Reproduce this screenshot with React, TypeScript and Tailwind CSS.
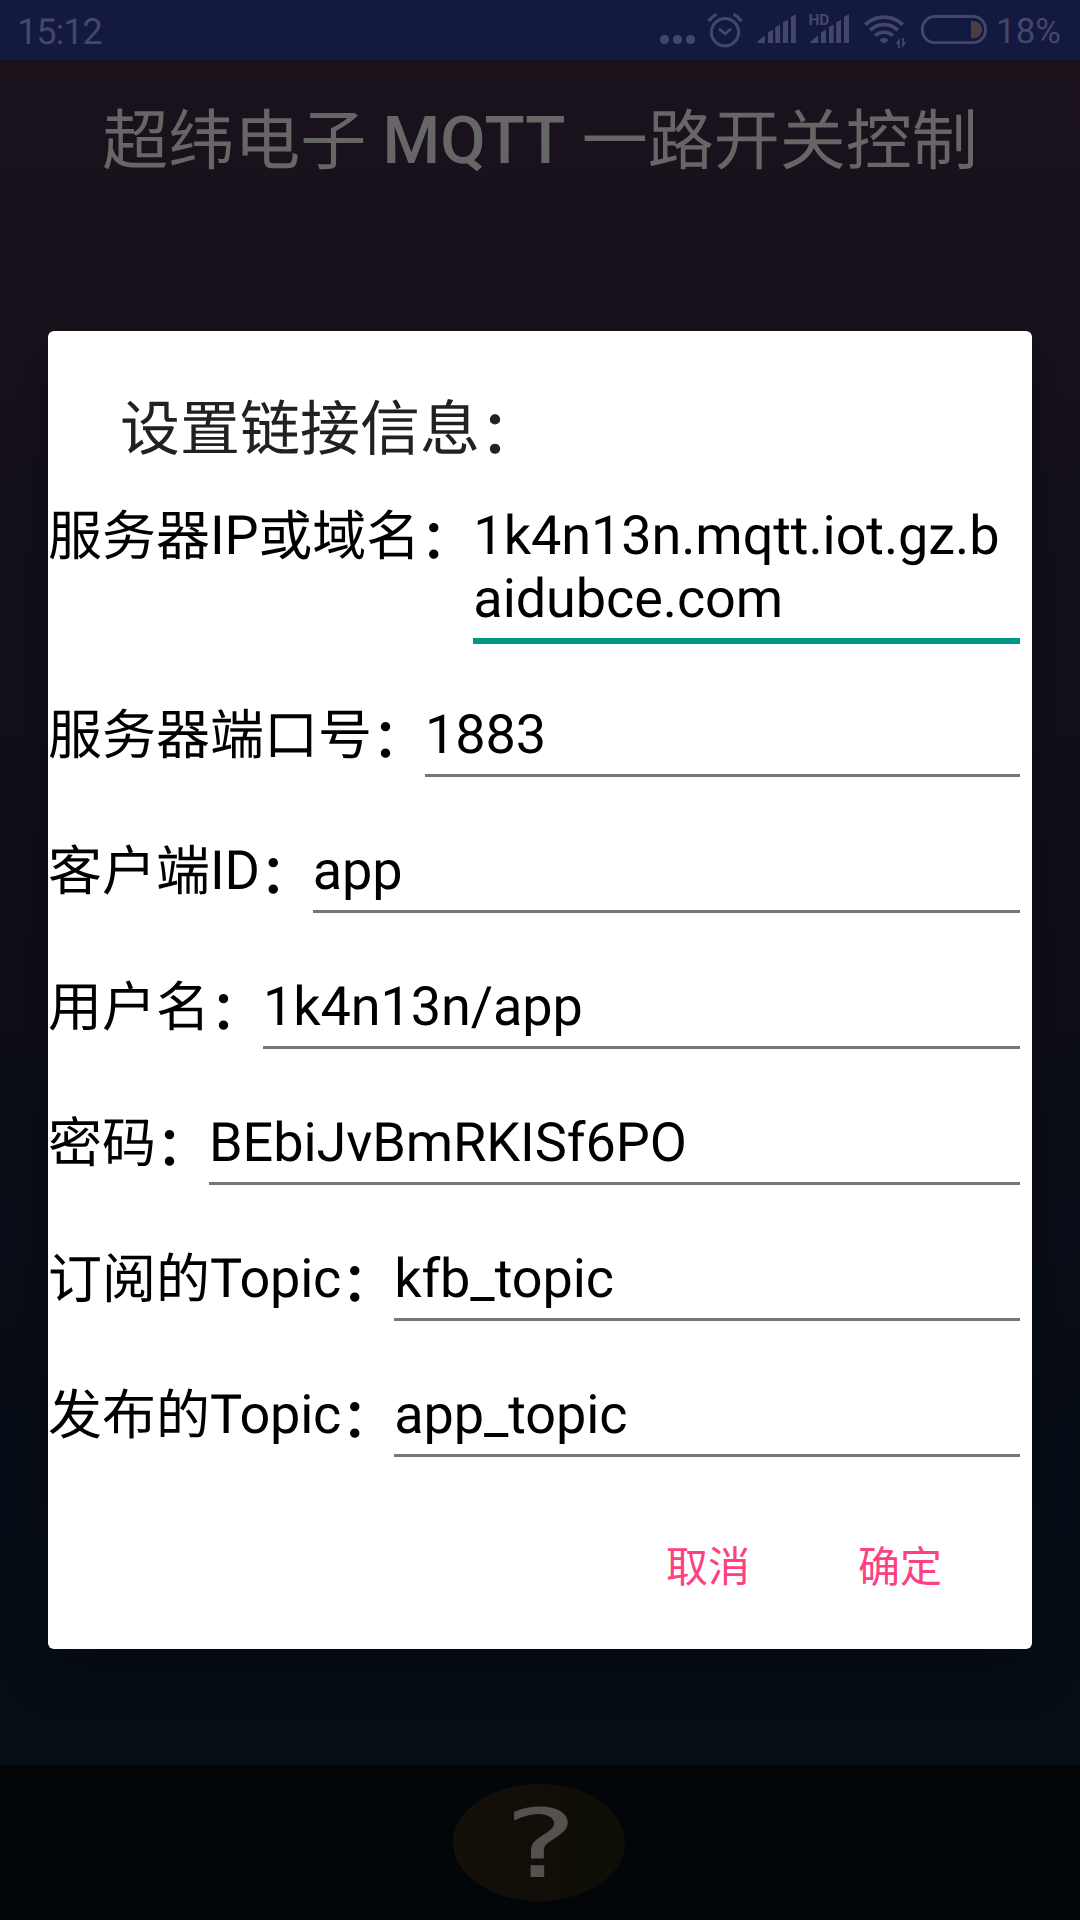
import React from "react";

type Field = { label: string; lines: string[]; active?: boolean };

const fields: Field[] = [
  { label: "服务器IP或域名：", lines: ["1k4n13n.mqtt.iot.gz.b", "aidubce.com"], active: true },
  { label: "服务器端口号：", lines: ["1883"] },
  { label: "客户端ID：", lines: ["app"] },
  { label: "用户名：", lines: ["1k4n13n/app"] },
  { label: "密码：", lines: ["BEbiJvBmRKISf6PO"] },
  { label: "订阅的Topic：", lines: ["kfb_topic"] },
  { label: "发布的Topic：", lines: ["app_topic"] },
];

function StatusIcons() {
  return (
    <svg width="334" height="60" viewBox="656 0 334 60" fill="#43476a" className="block shrink-0">
      <circle cx="664.5" cy="39.5" r="4.6" />
      <circle cx="677.5" cy="39.5" r="4.6" />
      <circle cx="690.5" cy="39.5" r="4.6" />
      <g fill="none" stroke="#43476a" strokeWidth="3">
        <circle cx="725" cy="32.2" r="13.6" />
        <path d="M719 28.8l6 5 6-5" strokeWidth="2.8" />
        <path d="M708.6 21.2q3-4.4 8-7M741.4 21.2q-3-4.4-8-7" strokeWidth="3.2" />
      </g>
      <path d="M757.5 43v-1.5l7.3-6V43zM768 43V32.3l5-2.5V43zM775.3 43V27l4.8-2.5V43zM783 43V22.2l5-2.2V43zM791 43V16.8l4.8-2.2V43z" />
      <path d="M810.5 43v-1.5l7.6-6V43zM821 43V32.3l5-2.5V43zM829 43V27l4.6-2.5V43zM836.2 43V22.2l4.8-2.2V43zM844 43V16.8l5-2.2V43z" />
      <text x="808.4" y="25.2" fontSize="15.4" fontWeight="700" fontFamily="Roboto">
        HD
      </text>
      <g fill="none" stroke="#43476a" strokeWidth="3.6">
        <path d="M865.3 24.8A26.6 26.6 0 0 1 902.7 24.8" />
        <path d="M870 30.3A20 20 0 0 1 898 30.3" />
        <path d="M875 35.8A13 13 0 0 1 893 35.8" />
      </g>
      <path d="M879.3 40Q884 35.3 888.3 40Q886.5 43 884 43.6Q881.5 43 879.3 40z" />
      <path d="M899.8 38v10h-1.8V43.8h-2.4zM902.2 48V38h1.8v4.2h2.4z" />
      <rect x="922.3" y="16.5" width="63.2" height="26.2" rx="12.6" fill="none" stroke="#43476a" strokeWidth="2.8" />
      <path d="M971 21h2.5a8.6 8.6 0 0 1 0 17.2H971z" fill="#4a3d43" />
    </svg>
  );
}

/** Mixed-script text: Han glyphs sit slightly below the Latin baseline and the colon is heavier. */
function Mixed({ text }: { text: string }) {
  const parts = text.match(/[\u4e00-\u9fff]+|：|[^\u4e00-\u9fff：]+/g) ?? [];
  return (
    <>
      {parts.map((part, i) =>
        part === "：" ? (
          <span key={i} className="align-[-4px] leading-none [-webkit-text-stroke:1.2px_currentColor]">
            {part}
          </span>
        ) : /[\u4e00-\u9fff]/.test(part) ? (
          <span key={i} className="align-[-1px] leading-none">
            {part}
          </span>
        ) : (
          <span key={i} className="tracking-[-0.2px]">
            {part}
          </span>
        ),
      )}
    </>
  );
}

function FieldRow({ label, lines, active }: Field) {
  return (
    <div className="flex items-start pr-3 text-[54px] leading-[63px] text-black">
      <label className="-mr-px shrink-0 whitespace-nowrap pt-px">
        <Mixed text={label} />
      </label>
      <div
        className={
          active
            ? "mb-[59px] grow border-b-[6px] border-[#009688] pb-[7px] pt-px"
            : "mb-[62px] grow border-b-[3px] border-[#757575] pb-[7px] pt-px"
        }
      >
        {lines.map((line) => (
          <div key={line} className="whitespace-nowrap tracking-[-0.08px]">
            {line}
          </div>
        ))}
      </div>
    </div>
  );
}

export default function App() {
  return (
    <div className="relative flex h-[1920px] w-[1080px] flex-col overflow-hidden bg-[linear-gradient(180deg,#1b111b_0%,#17111b_15%,#100f1a_45%,#080d16_72%,#060f16_92%)] font-['Roboto','Noto_Sans_CJK_SC',sans-serif] [text-rendering:geometricPrecision]">
      <header className="flex h-[60px] items-center bg-[#131940] pl-[17px] text-[36px] leading-[60px] text-[#43476a]">
        <span className="grow pt-[3px] tracking-[-1px]">15:12</span>
        <StatusIcons />
        <span className="w-[90px] whitespace-nowrap pl-[6px] pt-[3px] text-[35px]">18%</span>
      </header>
      <h1 className="mt-[43px] h-[78px] whitespace-nowrap text-center text-[66px] leading-[78px] font-normal text-[#666666]">
        <Mixed text="超纬电子" /> <span className="font-medium">MQTT</span> <Mixed text="一路开关控制" />
      </h1>
      <footer className="mt-auto flex h-[155px] justify-center bg-[#020609] pr-[3px] pt-[19px]">
        <div className="flex h-[117px] w-[172px] items-center justify-center rounded-[50%] bg-linear-to-r from-[#140f09] to-[#0e0e06]">
          <span className="block scale-x-[1.45] pl-[3px] pt-[6px] font-['DejaVu_Sans'] text-[95px] leading-[117px] text-[#53524e]">?</span>
        </div>
      </footer>

      <section
        role="dialog"
        className="absolute left-12 top-[331px] flex h-[1318px] w-[984px] flex-col rounded-md bg-white shadow-[0_24px_48px_rgba(0,0,0,0.35)]"
      >
        <h2 className="mt-[63px] h-[70px] pl-[72px] text-[60px] leading-[70px] font-normal text-[#212121]">
          <Mixed text="设置链接信息：" />
        </h2>
        <div className="mt-[40px] flex flex-col">
          {fields.map((field) => (
            <FieldRow key={field.label} {...field} />
          ))}
        </div>
        <div className="flex justify-end gap-[108px] pr-[90px] pt-[19px] text-[42px] leading-[60px] text-[#ff4081]">
          <button>取消</button>
          <button>确定</button>
        </div>
      </section>
    </div>
  );
}
